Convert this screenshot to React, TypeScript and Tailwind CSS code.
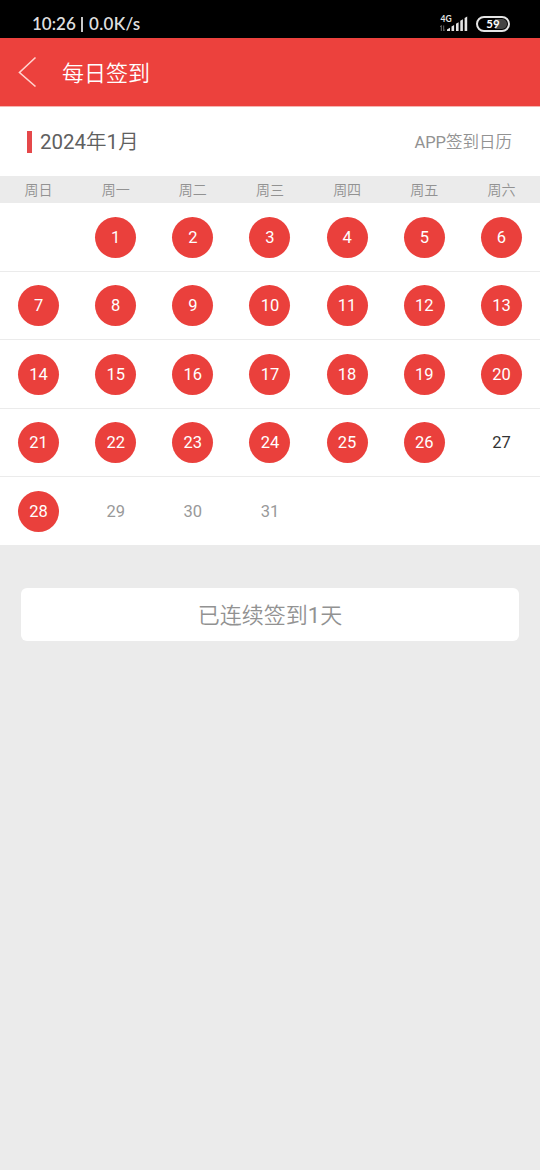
import React from "react";
import clsx from "clsx";

const WEEKDAYS = ["周日", "周一", "周二", "周三", "周四", "周五", "周六"];
const MISSED_DAYS = [27];
const TODAY = 28;

// 2024-01-01 is a Monday, so the first week starts with one blank cell
const WEEKS: (number | null)[][] = Array.from({ length: 5 }, (_, week) =>
  Array.from({ length: 7 }, (_, i) => {
    const day = week * 7 + i;
    return day >= 1 && day <= 31 ? day : null;
  }),
);

const StatusBar: React.FC = () => (
  <div className="flex h-[38px] items-end justify-between bg-black pr-[30px] pb-[5px] pl-8 text-[#dedede]">
    <div className="flex h-[18px] items-center font-['Lato',sans-serif] text-[17px] font-semibold">
      <span className="w-[46px] whitespace-nowrap">10:26</span>
      <span className="mr-[6px] ml-[3px] h-[15px] w-[2px] bg-[#c8c8c8]" />
      <span className="tracking-[0.3px] whitespace-nowrap">0.0K/s</span>
    </div>
    <div className="flex items-end">
      <svg width="29" height="18" viewBox="0 0 29 18" className="mr-2 mb-px">
        <text
          x="1.5"
          y="8"
          fontSize="8.5"
          fontWeight="700"
          fontFamily="Lato, sans-serif"
          fill="#e4e4e4"
        >
          4G
        </text>
        <path
          d="M2.3 17v-5.5l-1 1.4M4.7 11.5V17l1-1.4"
          stroke="#777"
          strokeWidth="0.9"
          fill="none"
        />
        <path
          d="M8 17v-1.5l3-1.8V17zM12.5 17v-4.6l2.6-1.4v6zM17 17V9.7l2.6-1.4V17zM21.3 17V6.8l2.6-1.5V17zM25.6 17V4l2.6-1.6V17z"
          fill="#e4e4e4"
        />
      </svg>
      <div className="relative mb-px flex h-4 w-[34px] items-center justify-center rounded-full border-2 border-[#e4e4e4] p-px">
        <div className="ml-auto h-full w-3 rounded-r-full bg-[#454545]" />
        <span className="absolute inset-0 text-center font-['Lato',sans-serif] text-[11.5px] leading-3 font-bold text-white">
          59
        </span>
      </div>
    </div>
  </div>
);

const DayCell: React.FC<{ day: number | null }> = ({ day }) => {
  if (day === null) return <div />;
  const signed = day <= TODAY && !MISSED_DAYS.includes(day);

  return (
    <div className="flex items-center justify-center">
      <span
        className={clsx(
          "flex size-[41px] items-center justify-center rounded-full pt-[2px] text-[16.5px]",
          signed && "bg-[#ea403c] text-white",
          !signed && day < TODAY && "text-[#333]",
          day > TODAY && "text-[#999]",
        )}
      >
        {day}
      </span>
    </div>
  );
};

export default function App() {
  return (
    <div className="min-h-screen bg-[#ebebeb] font-['Roboto','Noto_Sans_CJK_SC',sans-serif]">
      <StatusBar />

      <header className="flex h-[69px] items-center border-b border-[#f5b5b1] bg-[#ec413d] pl-[18px] text-white">
        <button type="button" aria-label="返回">
          <svg width="19" height="32" viewBox="0 0 19 32" fill="none">
            <path
              d="M17.5 1.5 1.5 16.5l16 14"
              stroke="#ffd3cf"
              strokeWidth="1.6"
            />
          </svg>
        </button>
        <h1 className="ml-[25px] pt-[3px] text-[22px] leading-8 font-[350]">
          每日签到
        </h1>
      </header>

      <main>
        <section className="bg-white">
          <div className="flex h-[69px] items-center justify-between pr-7 pl-[27px]">
            <div className="flex items-center">
              <span className="mr-2 h-[22px] w-[5px] bg-[#e5484a]" />
              <h2 className="pt-[2px] text-[20.5px] font-[350] text-[#606060]">
                <span className="font-normal">2024</span>年
                <span className="font-normal">1</span>月
              </h2>
            </div>
            <span className="pt-[3px] text-[16.5px] font-[350] text-[#929292]">
              <span className="font-normal">APP</span>签到日历
            </span>
          </div>

          <div className="grid h-[27px] grid-cols-7 items-center bg-[#ebebeb] text-center text-sm font-[350] text-[#929292]">
            {WEEKDAYS.map((name) => (
              <span key={name}>{name}</span>
            ))}
          </div>

          {WEEKS.map((week, i) => (
            <div
              key={i}
              className="grid h-[68.5px] grid-cols-7 border-b border-[#ebebeb] pt-px"
            >
              {week.map((day, j) => (
                <DayCell key={j} day={day} />
              ))}
            </div>
          ))}
        </section>

        <div className="mx-[21px] mt-[42px] flex h-[53px] items-center justify-center rounded-md bg-white pt-[2px] text-[22px] font-[350] text-[#929292]">
          <p>
            已连续签到<span className="font-normal">1</span>天
          </p>
        </div>
      </main>
    </div>
  );
}
